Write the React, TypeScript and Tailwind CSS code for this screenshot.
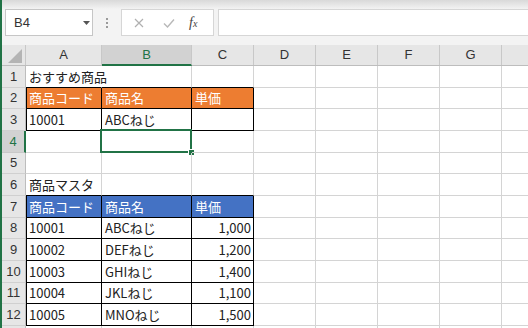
import React from "react";

const COLS = [
    { key: "A", w: 76 },
    { key: "B", w: 90 },
    { key: "C", w: 62 },
    { key: "D", w: 62 },
    { key: "E", w: 62 },
    { key: "F", w: 62 },
    { key: "G", w: 62 },
    { key: "H", w: 62 },
];

const ROW_H = [22, 21, 22, 22, 21, 22, 22, 21, 22, 22, 21, 22, 22];

type Cell = { text?: string; right?: boolean; fill?: "orange" | "blue" };

const DATA: Record<number, Cell[]> = {
    1: [{ text: "おすすめ商品" }],
    2: [
        { text: "商品コード", fill: "orange" },
        { text: "商品名", fill: "orange" },
        { text: "単価", fill: "orange" },
    ],
    3: [{ text: "10001" }, { text: "ABCねじ" }, {}],
    6: [{ text: "商品マスタ" }],
    7: [
        { text: "商品コード", fill: "blue" },
        { text: "商品名", fill: "blue" },
        { text: "単価", fill: "blue" },
    ],
    8: [{ text: "10001" }, { text: "ABCねじ" }, { text: "1,000", right: true }],
    9: [{ text: "10002" }, { text: "DEFねじ" }, { text: "1,200", right: true }],
    10: [{ text: "10003" }, { text: "GHIねじ" }, { text: "1,400", right: true }],
    11: [{ text: "10004" }, { text: "JKLねじ" }, { text: "1,100", right: true }],
    12: [{ text: "10005" }, { text: "MNOねじ" }, { text: "1,500", right: true }],
};

// cells with black borders
const inTable = (r: number, c: number) =>
    c <= 2 && ((r >= 2 && r <= 3) || (r >= 7 && r <= 12));

const FONT = "font-['Noto_Sans_CJK_JP','Noto_Sans',sans-serif]";

function FormulaBar() {
    return (
        <div className="flex items-stretch h-[27px] shrink-0 pl-[3px]">
            <div className="relative w-[88px] bg-white border border-[#c6c6c6] flex items-center pl-[8px] text-[13px] text-[#333] font-['Liberation_Sans',sans-serif]">
                B4
                <svg className="absolute left-[77px] top-[11px]" width="7" height="4" viewBox="0 0 7 4">
                    <path d="M0 0h7L3.5 4z" fill="#555" />
                </svg>
            </div>
            <div className="w-[28px] flex flex-col items-center justify-center gap-[2px]">
                <span className="w-[2px] h-[2px] bg-[#9a9a9a]" />
                <span className="w-[2px] h-[2px] bg-[#9a9a9a]" />
                <span className="w-[2px] h-[2px] bg-[#9a9a9a]" />
            </div>
            <div className="w-[93px] bg-white border border-[#d6d6d6] flex items-center">
                <svg className="ml-[12px]" width="10" height="10" viewBox="0 0 10 10">
                    <path d="M1 1l8 8M9 1l-8 8" stroke="#b0b0b0" strokeWidth="1.2" />
                </svg>
                <svg className="ml-[19px]" width="12" height="10" viewBox="0 0 12 10">
                    <path d="M1 5.5l3.5 3.5L11 1.5" stroke="#b8b8b8" strokeWidth="1.4" fill="none" />
                </svg>
                <span className="ml-[14px] italic text-[14px] text-[#444] font-['Liberation_Serif',serif] leading-none">
                    f<span className="text-[10px] italic">x</span>
                </span>
            </div>
            <div className="flex-1 ml-[4px] bg-white border border-[#d6d6d6] border-r-0" />
        </div>
    );
}

export default function App() {
    const rows = ROW_H.map((h, i) => ({ n: i + 1, h }));

    return (
        <div className="w-[528px] h-[328px] overflow-hidden bg-[#f3f3f3] border-l-2 border-[#217346] flex flex-col">
            <div className="h-[9px] shrink-0 bg-gradient-to-b from-[#d9d9d9] to-[#f3f3f3]" />
            <FormulaBar />
            <div className="h-[9px] shrink-0" />

            {/* column headers */}
            <div className="flex shrink-0 h-[21px] bg-[#e6e6e6] border-b border-[#bdbdbd] text-[13px] text-[#333] font-['Liberation_Sans',sans-serif]">
                <div className="w-[24px] shrink-0 relative border-r border-[#c8c8c8]">
                    <svg className="absolute right-[3px] bottom-[2px]" width="14" height="14" viewBox="0 0 14 14">
                        <path d="M14 0V14H0z" fill="#b4b4b4" />
                    </svg>
                </div>
                {COLS.map((c) => (
                    <div
                        key={c.key}
                        style={{ width: c.w }}
                        className={
                            c.key === "B"
                                ? "shrink-0 flex items-center justify-center bg-[#d2d2d2] text-[#217346] border-r border-[#c8c8c8] border-b-2 border-b-[#217346] -mb-px"
                                : "shrink-0 flex items-center justify-center border-r border-[#c8c8c8]"
                        }
                    >
                        {c.key !== "H" && c.key}
                    </div>
                ))}
            </div>

            {/* grid */}
            <div className="flex flex-col shrink-0">
                {rows.map(({ n, h }) => (
                    <div key={n} className="flex shrink-0" style={{ height: h }}>
                        <div
                            className={
                                n === 4
                                    ? "w-[24px] shrink-0 flex items-center justify-center bg-[#d2d2d2] text-[#217346] border-r-2 border-[#217346] border-b border-b-[#c8c8c8] text-[13px] font-['Liberation_Sans',sans-serif]"
                                    : "w-[24px] shrink-0 flex items-center justify-center bg-[#e6e6e6] text-[#333] border-r border-[#bdbdbd] border-b border-b-[#d0d0d0] text-[13px] font-['Liberation_Sans',sans-serif]"
                            }
                        >
                            {n <= 12 && n}
                        </div>
                        <div className="flex bg-white">
                            {COLS.map((c, ci) => {
                                const cell = DATA[n]?.[ci];
                                const t = inTable(n, ci);
                                const rightBlack = t || inTable(n, ci + 1);
                                const bottomBlack = t || inTable(n + 1, ci);
                                const spill = n === 1 && ci === 0;
                                const fill =
                                    cell?.fill === "orange"
                                        ? "bg-[#ed7d31] text-white"
                                        : cell?.fill === "blue"
                                        ? "bg-[#4472c4] text-white"
                                        : "text-[#222]";
                                return (
                                    <div
                                        key={c.key}
                                        style={{ width: c.w }}
                                        className={[
                                            "relative shrink-0 flex items-center whitespace-nowrap text-[13px] border-r border-b",
                                            FONT,
                                            fill,
                                            cell?.right ? "justify-end pr-[2px]" : "pl-[3px]",
                                            spill ? "border-r-transparent z-10" : rightBlack ? "border-r-[#000]" : "border-r-[#d4d4d4]",
                                            bottomBlack ? "border-b-[#000]" : "border-b-[#d4d4d4]",
                                            ci === 0 && t ? "shadow-[inset_1px_0_0_#000]" : "",
                                        ].join(" ")}
                                    >
                                        {cell?.text}
                                        {n === 4 && ci === 1 && (
                                            <div className="absolute -left-[2px] -top-[2px] -right-px -bottom-px border-2 border-[#217346]">
                                                <div className="absolute -right-[5px] -bottom-[5px] w-[7px] h-[7px] bg-[#217346] border border-white" />
                                            </div>
                                        )}
                                    </div>
                                );
                            })}
                        </div>
                    </div>
                ))}
            </div>
        </div>
    );
}
